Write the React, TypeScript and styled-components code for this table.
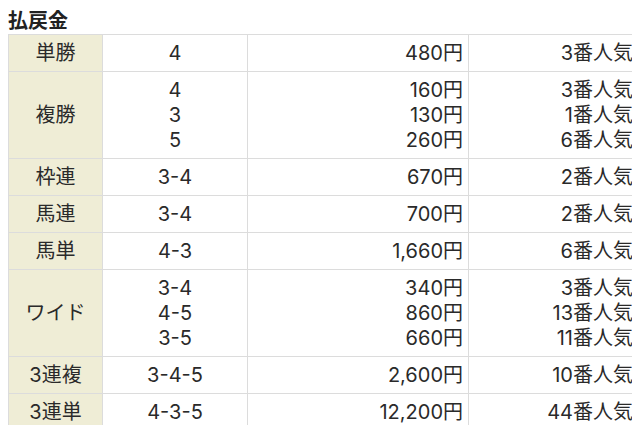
import React from "react";
import styled, { createGlobalStyle } from "styled-components";

const Global = createGlobalStyle`
  html { overflow: hidden; background: #ffffff; }
  body {
    margin: 8px;
    font-family: "Inter", "Noto Sans CJK JP", sans-serif;
    color: #333333;
  }
`;

const Title = styled.h3`
  margin: 0 0 2px 0;
  font-family: "Noto Sans CJK JP", sans-serif;
  font-size: 20px;
  line-height: 24px;
  font-weight: 700;
  color: #222222;
`;

const Table = styled.table`
  border-collapse: collapse;
  table-layout: fixed;
  width: 630px;
  font-size: 20px;
  line-height: 25px;
`;

const Row = styled.tr``;

const Cell = styled.td<{ $align?: "left" | "center" | "right"; $label?: boolean }>`
  border: 1px solid #dcdcdc;
  padding: 6px 5px 5px 5px;
  text-align: ${(p) => p.$align ?? "center"};
  background: ${(p) => (p.$label ? "#efedd6" : "#ffffff")};
  color: #2a2a2a;
  white-space: nowrap;
  vertical-align: middle;
`;

const Line = styled.div`
  height: 25px;
`;

type Entry = { combo: string; pay: string; pop: string };
type Bet = { name: string; entries: Entry[] };

const data: Bet[] = [
  { name: "単勝", entries: [{ combo: "4", pay: "480円", pop: "3番人気" }] },
  {
    name: "複勝",
    entries: [
      { combo: "4", pay: "160円", pop: "3番人気" },
      { combo: "3", pay: "130円", pop: "1番人気" },
      { combo: "5", pay: "260円", pop: "6番人気" },
    ],
  },
  { name: "枠連", entries: [{ combo: "3-4", pay: "670円", pop: "2番人気" }] },
  { name: "馬連", entries: [{ combo: "3-4", pay: "700円", pop: "2番人気" }] },
  { name: "馬単", entries: [{ combo: "4-3", pay: "1,660円", pop: "6番人気" }] },
  {
    name: "ワイド",
    entries: [
      { combo: "3-4", pay: "340円", pop: "3番人気" },
      { combo: "4-5", pay: "860円", pop: "13番人気" },
      { combo: "3-5", pay: "660円", pop: "11番人気" },
    ],
  },
  { name: "3連複", entries: [{ combo: "3-4-5", pay: "2,600円", pop: "10番人気" }] },
  { name: "3連単", entries: [{ combo: "4-3-5", pay: "12,200円", pop: "44番人気" }] },
];

export default function App() {
  return (
    <>
      <Global />
      <Title>払戻金</Title>
      <Table>
        <colgroup>
          <col style={{ width: 94 }} />
          <col style={{ width: 145 }} />
          <col style={{ width: 221 }} />
          <col style={{ width: 170 }} />
        </colgroup>
        <tbody>
          {data.map((bet) => (
            <Row key={bet.name}>
              <Cell $label>{bet.name}</Cell>
              <Cell>
                {bet.entries.map((e, i) => (
                  <Line key={i}>{e.combo}</Line>
                ))}
              </Cell>
              <Cell $align="right">
                {bet.entries.map((e, i) => (
                  <Line key={i}>{e.pay}</Line>
                ))}
              </Cell>
              <Cell $align="right">
                {bet.entries.map((e, i) => (
                  <Line key={i}>{e.pop}</Line>
                ))}
              </Cell>
            </Row>
          ))}
        </tbody>
      </Table>
    </>
  );
}
